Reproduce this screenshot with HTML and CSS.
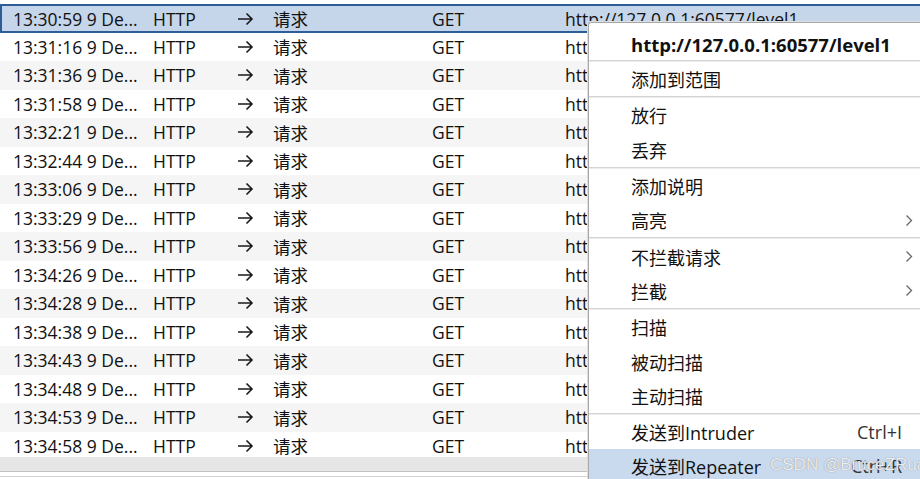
FILE: index.html
```html
<!DOCTYPE html>
<html lang="zh-CN">
<head>
  <meta charset="UTF-8">
  <title>HTTP history</title>
  <link rel="stylesheet" href="styles.css">
</head>
<body>
  <div id="history">
    <div id="rows">
      <div class="row selected"><span class="time">13:30:59 9 De...</span><span>HTTP</span><span class="dir"><svg width="17" height="14" viewBox="0 0 17 14"><path d="M1 7H15M9.5 1.5L15 7L9.5 12.5" fill="none" stroke="#1a1a1a" stroke-width="1.6"/></svg></span><span>请求</span><span>GET</span><span>http://127.0.0.1:60577/level1</span></div>
      <div class="row"><span class="time">13:31:16 9 De...</span><span>HTTP</span><span class="dir"><svg width="17" height="14" viewBox="0 0 17 14"><path d="M1 7H15M9.5 1.5L15 7L9.5 12.5" fill="none" stroke="#1a1a1a" stroke-width="1.6"/></svg></span><span>请求</span><span>GET</span><span>http://127.0.0.1:60577/level1</span></div>
      <div class="row"><span class="time">13:31:36 9 De...</span><span>HTTP</span><span class="dir"><svg width="17" height="14" viewBox="0 0 17 14"><path d="M1 7H15M9.5 1.5L15 7L9.5 12.5" fill="none" stroke="#1a1a1a" stroke-width="1.6"/></svg></span><span>请求</span><span>GET</span><span>http://127.0.0.1:60577/level1</span></div>
      <div class="row"><span class="time">13:31:58 9 De...</span><span>HTTP</span><span class="dir"><svg width="17" height="14" viewBox="0 0 17 14"><path d="M1 7H15M9.5 1.5L15 7L9.5 12.5" fill="none" stroke="#1a1a1a" stroke-width="1.6"/></svg></span><span>请求</span><span>GET</span><span>http://127.0.0.1:60577/level1</span></div>
      <div class="row"><span class="time">13:32:21 9 De...</span><span>HTTP</span><span class="dir"><svg width="17" height="14" viewBox="0 0 17 14"><path d="M1 7H15M9.5 1.5L15 7L9.5 12.5" fill="none" stroke="#1a1a1a" stroke-width="1.6"/></svg></span><span>请求</span><span>GET</span><span>http://127.0.0.1:60577/level1</span></div>
      <div class="row"><span class="time">13:32:44 9 De...</span><span>HTTP</span><span class="dir"><svg width="17" height="14" viewBox="0 0 17 14"><path d="M1 7H15M9.5 1.5L15 7L9.5 12.5" fill="none" stroke="#1a1a1a" stroke-width="1.6"/></svg></span><span>请求</span><span>GET</span><span>http://127.0.0.1:60577/level1</span></div>
      <div class="row"><span class="time">13:33:06 9 De...</span><span>HTTP</span><span class="dir"><svg width="17" height="14" viewBox="0 0 17 14"><path d="M1 7H15M9.5 1.5L15 7L9.5 12.5" fill="none" stroke="#1a1a1a" stroke-width="1.6"/></svg></span><span>请求</span><span>GET</span><span>http://127.0.0.1:60577/level1</span></div>
      <div class="row"><span class="time">13:33:29 9 De...</span><span>HTTP</span><span class="dir"><svg width="17" height="14" viewBox="0 0 17 14"><path d="M1 7H15M9.5 1.5L15 7L9.5 12.5" fill="none" stroke="#1a1a1a" stroke-width="1.6"/></svg></span><span>请求</span><span>GET</span><span>http://127.0.0.1:60577/level1</span></div>
      <div class="row"><span class="time">13:33:56 9 De...</span><span>HTTP</span><span class="dir"><svg width="17" height="14" viewBox="0 0 17 14"><path d="M1 7H15M9.5 1.5L15 7L9.5 12.5" fill="none" stroke="#1a1a1a" stroke-width="1.6"/></svg></span><span>请求</span><span>GET</span><span>http://127.0.0.1:60577/level1</span></div>
      <div class="row"><span class="time">13:34:26 9 De...</span><span>HTTP</span><span class="dir"><svg width="17" height="14" viewBox="0 0 17 14"><path d="M1 7H15M9.5 1.5L15 7L9.5 12.5" fill="none" stroke="#1a1a1a" stroke-width="1.6"/></svg></span><span>请求</span><span>GET</span><span>http://127.0.0.1:60577/level1</span></div>
      <div class="row"><span class="time">13:34:28 9 De...</span><span>HTTP</span><span class="dir"><svg width="17" height="14" viewBox="0 0 17 14"><path d="M1 7H15M9.5 1.5L15 7L9.5 12.5" fill="none" stroke="#1a1a1a" stroke-width="1.6"/></svg></span><span>请求</span><span>GET</span><span>http://127.0.0.1:60577/level1</span></div>
      <div class="row"><span class="time">13:34:38 9 De...</span><span>HTTP</span><span class="dir"><svg width="17" height="14" viewBox="0 0 17 14"><path d="M1 7H15M9.5 1.5L15 7L9.5 12.5" fill="none" stroke="#1a1a1a" stroke-width="1.6"/></svg></span><span>请求</span><span>GET</span><span>http://127.0.0.1:60577/level1</span></div>
      <div class="row"><span class="time">13:34:43 9 De...</span><span>HTTP</span><span class="dir"><svg width="17" height="14" viewBox="0 0 17 14"><path d="M1 7H15M9.5 1.5L15 7L9.5 12.5" fill="none" stroke="#1a1a1a" stroke-width="1.6"/></svg></span><span>请求</span><span>GET</span><span>http://127.0.0.1:60577/level1</span></div>
      <div class="row"><span class="time">13:34:48 9 De...</span><span>HTTP</span><span class="dir"><svg width="17" height="14" viewBox="0 0 17 14"><path d="M1 7H15M9.5 1.5L15 7L9.5 12.5" fill="none" stroke="#1a1a1a" stroke-width="1.6"/></svg></span><span>请求</span><span>GET</span><span>http://127.0.0.1:60577/level1</span></div>
      <div class="row"><span class="time">13:34:53 9 De...</span><span>HTTP</span><span class="dir"><svg width="17" height="14" viewBox="0 0 17 14"><path d="M1 7H15M9.5 1.5L15 7L9.5 12.5" fill="none" stroke="#1a1a1a" stroke-width="1.6"/></svg></span><span>请求</span><span>GET</span><span>http://127.0.0.1:60577/level1</span></div>
      <div class="row"><span class="time">13:34:58 9 De...</span><span>HTTP</span><span class="dir"><svg width="17" height="14" viewBox="0 0 17 14"><path d="M1 7H15M9.5 1.5L15 7L9.5 12.5" fill="none" stroke="#1a1a1a" stroke-width="1.6"/></svg></span><span>请求</span><span>GET</span><span>http://127.0.0.1:60577/level1</span></div>
    </div>
    <div id="hscroll"></div>
    <div id="footer"></div>
  </div>

  <div id="ctxMenu">
    <div class="menu-head">http://127.0.0.1:60577/level1</div>
    <div class="sep"></div>
    <div class="item">添加到范围</div>
    <div class="sep"></div>
    <div class="item">放行</div>
    <div class="item">丢弃</div>
    <div class="sep"></div>
    <div class="item">添加说明</div>
    <div class="item">高亮<svg class="chev" width="8" height="13" viewBox="0 0 8 13"><path d="M1.5 1.5L6.5 6.5L1.5 11.5" fill="none" stroke="#666" stroke-width="1.3"/></svg></div>
    <div class="sep"></div>
    <div class="item">不拦截请求<svg class="chev" width="8" height="13" viewBox="0 0 8 13"><path d="M1.5 1.5L6.5 6.5L1.5 11.5" fill="none" stroke="#666" stroke-width="1.3"/></svg></div>
    <div class="item">拦截<svg class="chev" width="8" height="13" viewBox="0 0 8 13"><path d="M1.5 1.5L6.5 6.5L1.5 11.5" fill="none" stroke="#666" stroke-width="1.3"/></svg></div>
    <div class="sep"></div>
    <div class="item">扫描</div>
    <div class="item">被动扫描</div>
    <div class="item">主动扫描</div>
    <div class="sep"></div>
    <div class="item">发送到Intruder<span class="key">Ctrl+I</span></div>
    <div class="item hot">发送到Repeater<span class="key">Ctrl+R</span></div>
  </div>

  <div id="watermark">CSDN @BruceZRua</div>
</body>
</html>
```

FILE: styles.css
```css
html, body {
  margin: 0;
  padding: 0;
  width: 100%;
  height: 100%;
  overflow: hidden;
  background: #fff;
  font-family: "Open Sans", "Noto Sans CJK SC", sans-serif;
  font-size: 17.5px;
  color: #111;
}
#history {
  display: flex;
  flex-direction: column;
  height: 100%;
  padding-top: 4px;
  box-sizing: border-box;
}
#rows {
  height: 453px;
  overflow: hidden;
}
.row {
  display: grid;
  grid-template-columns: 140px 84px 36px 159px 133px 1fr;
  align-items: center;
  height: 28.5px;
  padding-left: 13px;
  box-sizing: border-box;
  white-space: nowrap;
  overflow: hidden;
}
.row:nth-child(odd) {
  background-color: #f5f5f5;
}
.row.selected {
  background-color: #c5d5ea;
  border: 2px solid #2d5d97;
  border-right: none;
  padding-left: 11px;
}
.dir {
  display: flex;
  align-items: center;
}
#hscroll {
  height: 14px;
  background-color: #e6e6e6;
  border-bottom: 1px solid #c2c2c2;
}
#footer {
  height: 4px;
  border-bottom: 1px solid #d2d2d2;
}

#ctxMenu {
  position: absolute;
  left: 588px;
  top: 22px;
  width: 345px;
  background: #fff;
  border: 1px solid #a8a8a8;
  border-right: none;
  box-shadow: -1px -1px 0 #dedede;
  border-radius: 3px 0 0 0;
  font-size: 18px;
}
.menu-head {
  height: 37px;
  padding: 6px 0 0 42px;
  box-sizing: border-box;
  display: flex;
  align-items: center;
  font-weight: bold;
  font-size: 18.5px;
  color: #111;
}
.sep {
  height: 1px;
  border-top: 1px solid #d4d4d4;
  background: #ececec;
}
.item {
  display: flex;
  align-items: center;
  height: 34.3px;
  padding: 0 27px 0 42px;
  position: relative;
}
.item.hot {
  background-color: #c9d9ee;
}
.chev {
  position: absolute;
  left: 316px;
}
.key {
  position: absolute;
  right: 32px;
  color: #333;
}

#watermark {
  position: absolute;
  left: 770px;
  top: 455px;
  white-space: nowrap;
  font-family: "Liberation Sans", sans-serif;
  font-size: 17px;
  color: rgba(255, 255, 255, 0.85);
  text-shadow: 0 0 1px #7a7a7a;
}
```
